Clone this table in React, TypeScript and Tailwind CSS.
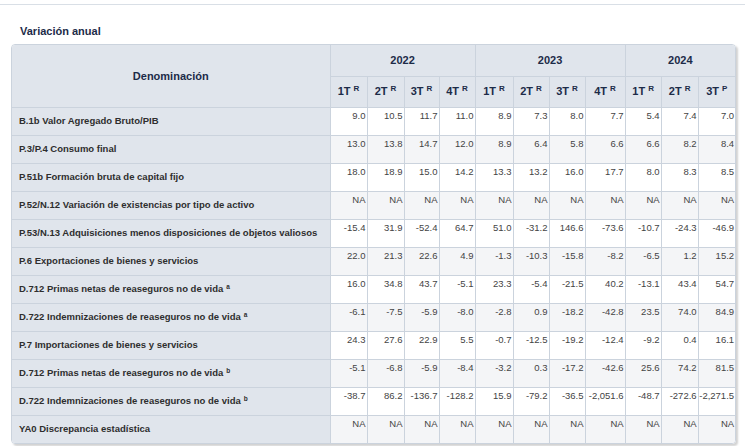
import React from 'react'

type Row = {
  label: string
  note?: string
  values: string[]
}

const NA = Array(11).fill('NA')

const rows: Row[] = [
  { label: 'B.1b Valor Agregado Bruto/PIB', values: ['9.0', '10.5', '11.7', '11.0', '8.9', '7.3', '8.0', '7.7', '5.4', '7.4', '7.0'] },
  { label: 'P.3/P.4 Consumo final', values: ['13.0', '13.8', '14.7', '12.0', '8.9', '6.4', '5.8', '6.6', '6.6', '8.2', '8.4'] },
  { label: 'P.51b Formación bruta de capital fijo', values: ['18.0', '18.9', '15.0', '14.2', '13.3', '13.2', '16.0', '17.7', '8.0', '8.3', '8.5'] },
  { label: 'P.52/N.12 Variación de existencias por tipo de activo', values: NA },
  { label: 'P.53/N.13 Adquisiciones menos disposiciones de objetos valiosos', values: ['-15.4', '31.9', '-52.4', '64.7', '51.0', '-31.2', '146.6', '-73.6', '-10.7', '-24.3', '-46.9'] },
  { label: 'P.6 Exportaciones de bienes y servicios', values: ['22.0', '21.3', '22.6', '4.9', '-1.3', '-10.3', '-15.8', '-8.2', '-6.5', '1.2', '15.2'] },
  { label: 'D.712 Primas netas de reaseguros no de vida', note: 'a', values: ['16.0', '34.8', '43.7', '-5.1', '23.3', '-5.4', '-21.5', '40.2', '-13.1', '43.4', '54.7'] },
  { label: 'D.722 Indemnizaciones de reaseguros no de vida', note: 'a', values: ['-6.1', '-7.5', '-5.9', '-8.0', '-2.8', '0.9', '-18.2', '-42.8', '23.5', '74.0', '84.9'] },
  { label: 'P.7 Importaciones de bienes y servicios', values: ['24.3', '27.6', '22.9', '5.5', '-0.7', '-12.5', '-19.2', '-12.4', '-9.2', '0.4', '16.1'] },
  { label: 'D.712 Primas netas de reaseguros no de vida', note: 'b', values: ['-5.1', '-6.8', '-5.9', '-8.4', '-3.2', '0.3', '-17.2', '-42.6', '25.6', '74.2', '81.5'] },
  { label: 'D.722 Indemnizaciones de reaseguros no de vida', note: 'b', values: ['-38.7', '86.2', '-136.7', '-128.2', '15.9', '-79.2', '-36.5', '-2,051.6', '-48.7', '-272.6', '-2,271.5'] },
  { label: 'YA0 Discrepancia estadística', values: NA }
]

const quarters = [
  { q: '1T', s: 'R' }, { q: '2T', s: 'R' }, { q: '3T', s: 'R' }, { q: '4T', s: 'R' },
  { q: '1T', s: 'R' }, { q: '2T', s: 'R' }, { q: '3T', s: 'R' }, { q: '4T', s: 'R' },
  { q: '1T', s: 'R' }, { q: '2T', s: 'R' }, { q: '3T', s: 'P' }
]

// column widths measured off the reference (box is 725 incl. its 1px border)
const widths = [318, 37, 37, 35, 36, 38, 36, 36, 40, 36, 37, 37]

function App(): React.JSX.Element {
  return (
    <div className="h-[446px] w-[745px] overflow-hidden bg-white pt-[4px] font-['Liberation_Sans',Arial,sans-serif]">
      <div className="border-t border-[#d9dfe6]" />
      <h2 className="ml-[20px] mt-[19px] h-[14px] text-[11px] font-bold leading-[14px] text-[#1c2b48]">
        Variación anual
      </h2>
      <div className="ml-[11px] mt-[6px] w-[725px] overflow-hidden rounded-[4px] border border-[#cbd3dd] shadow-[2px_2px_2px_rgba(0,0,0,0.18)]">
        <table className="w-full table-fixed border-collapse">
          <colgroup>
            {widths.map((w, i) => (
              <col key={i} style={{ width: w }} />
            ))}
          </colgroup>
          <thead>
            <tr className="h-[31px] bg-[#e0e5ec] text-[11px] font-bold text-[#1c2b48]">
              <th rowSpan={2} className="border-b border-r border-[#cbd3dd] text-center align-middle">
                Denominación
              </th>
              <th colSpan={4} className="border-b border-r border-[#cbd3dd]">2022</th>
              <th colSpan={4} className="border-b border-r border-[#cbd3dd]">2023</th>
              <th colSpan={3} className="border-b border-[#cbd3dd]">2024</th>
            </tr>
            <tr className="h-[31px] bg-[#e0e5ec] text-[11px] font-bold text-[#1c2b48]">
              {quarters.map((q, i) => (
                <th
                  key={i}
                  className={`border-b border-[#cbd3dd] px-0 text-center ${i < 10 ? 'border-r' : ''}`}
                >
                  {q.q}
                  <sup className="ml-[3px] text-[8px]">{q.s}</sup>
                </th>
              ))}
            </tr>
          </thead>
          <tbody>
            {rows.map((row, r) => (
              <tr key={r} className="h-[28px]">
                <td
                  className={`border-r border-[#cbd3dd] bg-[#e0e5ec] pl-[7px] align-middle text-[9.5px] font-bold text-[#2e2e2e] ${r < rows.length - 1 ? 'border-b' : ''}`}
                >
                  {row.label}
                  {row.note ? <sup className="ml-[3px] text-[6.5px]">{row.note}</sup> : null}
                </td>
                {row.values.map((v, i) => (
                  <td
                    key={i}
                    className={`border-[#cbd3dd] pr-[1px] pt-[2px] text-right align-top text-[9.5px] leading-[12px] text-[#444] ${r % 2 === 1 ? 'bg-[#f4f5f7]' : 'bg-white'} ${i < 10 ? 'border-r' : ''} ${r < rows.length - 1 ? 'border-b' : ''}`}
                  >
                    {v}
                  </td>
                ))}
              </tr>
            ))}
          </tbody>
        </table>
      </div>
    </div>
  )
}

export default App
